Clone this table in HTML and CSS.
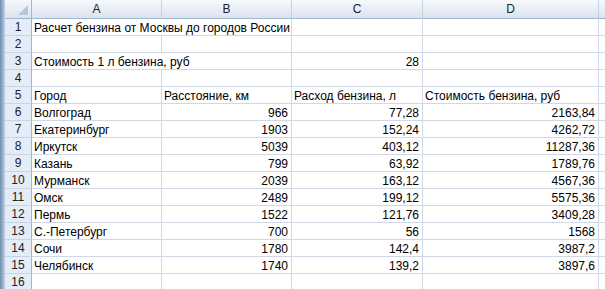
FILE: index.html
```html
<!DOCTYPE html>
<html lang="ru">
<head>
<meta charset="utf-8">
<title>Расчет бензина</title>
<link rel="stylesheet" href="styles.css">
</head>
<body>
<div class="window">
  <div class="strip"></div>
  <div class="sheet">
    <div class="corner"></div>
    <div class="colh">A</div><div class="colh">B</div><div class="colh">C</div><div class="colh">D</div><div class="colh colh-rest"></div>

    <div class="rowh">1</div><div class="c span2">Расчет бензина от Москвы до городов России</div><div class="c"></div><div class="c"></div><div class="c rest"></div>
    <div class="rowh">2</div><div class="c"></div><div class="c"></div><div class="c"></div><div class="c"></div><div class="c rest"></div>
    <div class="rowh">3</div><div class="c span2">Стоимость 1 л бензина, руб</div><div class="c n">28</div><div class="c"></div><div class="c rest"></div>
    <div class="rowh">4</div><div class="c"></div><div class="c"></div><div class="c"></div><div class="c"></div><div class="c rest"></div>
    <div class="rowh">5</div><div class="c">Город</div><div class="c">Расстояние, км</div><div class="c">Расход бензина, л</div><div class="c">Стоимость бензина, руб</div><div class="c rest"></div>
    <div class="rowh">6</div><div class="c">Волгоград</div><div class="c n">966</div><div class="c n">77,28</div><div class="c n">2163,84</div><div class="c rest"></div>
    <div class="rowh">7</div><div class="c">Екатеринбург</div><div class="c n">1903</div><div class="c n">152,24</div><div class="c n">4262,72</div><div class="c rest"></div>
    <div class="rowh">8</div><div class="c">Иркутск</div><div class="c n">5039</div><div class="c n">403,12</div><div class="c n">11287,36</div><div class="c rest"></div>
    <div class="rowh">9</div><div class="c">Казань</div><div class="c n">799</div><div class="c n">63,92</div><div class="c n">1789,76</div><div class="c rest"></div>
    <div class="rowh">10</div><div class="c">Мурманск</div><div class="c n">2039</div><div class="c n">163,12</div><div class="c n">4567,36</div><div class="c rest"></div>
    <div class="rowh">11</div><div class="c">Омск</div><div class="c n">2489</div><div class="c n">199,12</div><div class="c n">5575,36</div><div class="c rest"></div>
    <div class="rowh">12</div><div class="c">Пермь</div><div class="c n">1522</div><div class="c n">121,76</div><div class="c n">3409,28</div><div class="c rest"></div>
    <div class="rowh">13</div><div class="c">С.-Петербург</div><div class="c n">700</div><div class="c n">56</div><div class="c n">1568</div><div class="c rest"></div>
    <div class="rowh">14</div><div class="c">Сочи</div><div class="c n">1780</div><div class="c n">142,4</div><div class="c n">3987,2</div><div class="c rest"></div>
    <div class="rowh">15</div><div class="c">Челябинск</div><div class="c n">1740</div><div class="c n">139,2</div><div class="c n">3897,6</div><div class="c rest"></div>
    <div class="rowh">16</div><div class="c"></div><div class="c"></div><div class="c"></div><div class="c"></div><div class="c rest"></div>
  </div>
</div>
</body>
</html>
```
FILE: styles.css
```css
html, body {
  margin: 0;
  padding: 0;
  background: #ffffff;
  overflow: hidden;
}
.window {
  display: flex;
  width: 605px;
  height: 289px;
  overflow: hidden;
  font-family: "Liberation Sans", Arial, sans-serif;
  font-size: 12px;
  color: #000;
}
.strip {
  width: 5px;
  flex: none;
  background: linear-gradient(to right, #6d8bb0, #9fb5d0 60%, #c3d2e4);
}
.sheet {
  display: grid;
  grid-template-columns: 27px 130px 130px 131px 176px 6px;
  grid-template-rows: 19px;
  grid-auto-rows: 17px;
  align-content: start;
}
.corner {
  position: relative;
  box-sizing: border-box;
  background: linear-gradient(to bottom, #f4f7fb, #dbe4ef);
  border-right: 1px solid #9eb6ce;
  border-bottom: 1px solid #9eb6ce;
}
.corner::after {
  content: "";
  position: absolute;
  right: 3px;
  bottom: 3px;
  width: 0;
  height: 0;
  border-left: 10px solid transparent;
  border-bottom: 10px solid #b7c7db;
}
.colh {
  box-sizing: border-box;
  background: linear-gradient(to bottom, #f7f9fc 0%, #e9eef6 50%, #dbe3ee 100%);
  border-right: 1px solid #c5d3e3;
  border-bottom: 1px solid #9eb6ce;
  text-align: center;
  line-height: 18px;
  font-size: 12px;
  color: #222;
}
.colh-rest {
  border-right: none;
}
.rowh {
  box-sizing: border-box;
  background: #e4ecf7;
  border-right: 1px solid #9eb6ce;
  border-bottom: 1px solid #c5d3e3;
  text-align: center;
  line-height: 17px;
  font-size: 12px;
  color: #222;
}
.c {
  box-sizing: border-box;
  border-right: 1px solid #d0d7e5;
  border-bottom: 1px solid #d0d7e5;
  padding: 1px 3px 0 2px;
  line-height: 16px;
  white-space: nowrap;
  overflow: visible;
  min-width: 0;
}
.span2 {
  grid-column: span 2;
}
.n {
  text-align: right;
}
.rest {
  border-right: none;
}
```
